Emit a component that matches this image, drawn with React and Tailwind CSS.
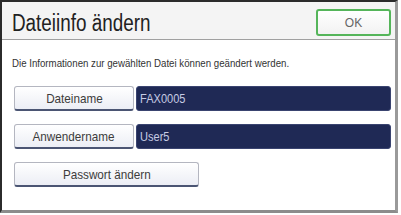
import React from "react";

const font = { fontFamily: '"Liberation Sans", Arial, sans-serif' };

function LabelButton({ label, width }) {
  return (
    <div
      className={`${width} h-[25px] shrink-0 flex items-center justify-center rounded-[3px] border border-[#b4b6c0] border-b-2 border-b-[#4b5573] bg-gradient-to-b from-white to-[#eceef5]`}
    >
      <span className="inline-block scale-x-[0.9] text-[13px] leading-none text-[#3c3c3c]">
        {label}
      </span>
    </div>
  );
}

function FieldRow({ label, value }) {
  return (
    <div className="flex items-center gap-[2px]">
      <LabelButton label={label} width="w-[120px]" />
      <div className="w-[255px] h-[25px] flex items-center rounded-[3px] bg-[#1f2955] pl-[3px] border border-[#3a4470]">
        <span className="inline-block origin-left scale-x-[0.85] text-[13px] leading-none text-[#c6cbe4]">
          {value}
        </span>
      </div>
    </div>
  );
}

export default function App() {
  return (
    <div className="w-[401px] h-[215px] bg-white" style={font}>
      <div className="w-[398px] h-[213px] flex flex-col border-l-2 border-t-2 border-[#2b2b2b] border-r-[3px] border-b-[3px] border-r-[#9a9a9a] border-b-[#8c8c8c]">
        <div className="h-[38px] shrink-0 flex items-start justify-between bg-[#f4f4f4] border-b border-[#a0a0a0] pl-[10px] pr-[4px]">
          <span className="inline-block origin-left scale-x-[0.82] whitespace-nowrap text-[23px] leading-[26px] mt-[8px] text-[#222]">
            Dateiinfo ändern
          </span>
          <div className="w-[75px] h-[27px] mt-[7px] flex items-center justify-center rounded-[3px] border-2 border-[#55b55a] bg-gradient-to-b from-white to-[#f2f2f2]">
            <span className="text-[12px] leading-none text-[#666]">OK</span>
          </div>
        </div>
        <div className="pl-[10px] pt-[10px] h-[46px] shrink-0">
          <span className="inline-block origin-left scale-x-[0.88] whitespace-nowrap text-[11px] leading-[13px] text-[#333]">
            Die Informationen zur gewählten Datei können geändert werden.
          </span>
        </div>
        <div className="flex flex-col gap-[13px] pl-[12px]">
          <FieldRow label="Dateiname" value="FAX0005" />
          <FieldRow label="Anwendername" value="User5" />
          <div className="flex">
            <LabelButton label="Passwort ändern" width="w-[185px]" />
          </div>
        </div>
      </div>
    </div>
  );
}
